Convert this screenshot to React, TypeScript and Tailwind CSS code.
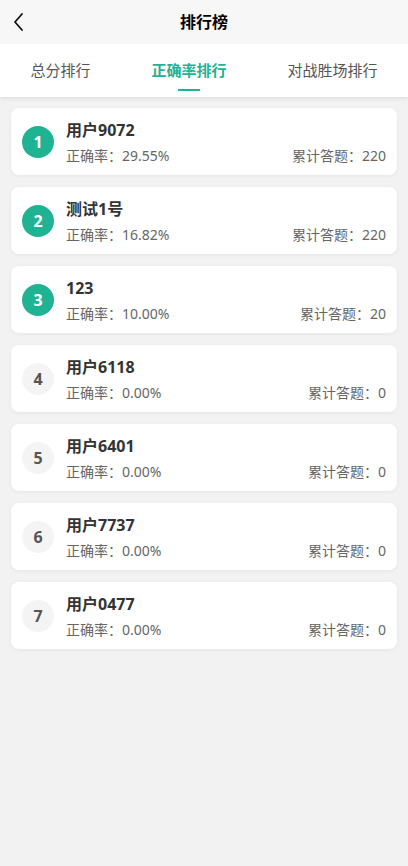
import React from "react";

const rows = [
  { name: "用户9072", rate: "29.55%", total: "220" },
  { name: "测试1号", rate: "16.82%", total: "220" },
  { name: "123", rate: "10.00%", total: "20" },
  { name: "用户6118", rate: "0.00%", total: "0" },
  { name: "用户6401", rate: "0.00%", total: "0" },
  { name: "用户7737", rate: "0.00%", total: "0" },
  { name: "用户0477", rate: "0.00%", total: "0" },
];

export default function App() {
  return (
    <div
      className="min-h-[866px] w-[408px] bg-[#f2f2f2]"
      style={{ fontFamily: '"Noto Sans", "Noto Sans CJK SC", sans-serif' }}
    >
      <div className="relative flex h-[44px] items-center justify-center bg-[#f7f7f7]">
        <svg className="absolute left-[12px] top-[12px]" width="14" height="20" viewBox="0 0 14 20" fill="none">
          <path d="M10 2 L3 10 L10 18" stroke="#111" strokeWidth="1.8" strokeLinecap="round" strokeLinejoin="round" />
        </svg>
        <span className="text-[16px] font-bold text-black">排行榜</span>
      </div>
      <div className="relative z-10 flex h-[53px] justify-around bg-white shadow-[0_2px_4px_rgba(0,0,0,0.08)]">
        <div className="flex items-center pb-[1px] text-[15px] text-[#555]">总分排行</div>
        <div className="relative flex items-center pb-[1px] text-[15px] font-bold text-[#1fb394]">
          正确率排行
          <div className="absolute bottom-[6px] left-1/2 h-[2px] w-[22px] -translate-x-1/2 bg-[#1fb394]" />
        </div>
        <div className="flex items-center pb-[1px] text-[15px] text-[#555]">对战胜场排行</div>
      </div>
      <div className="flex flex-col gap-[12px] px-[11px] pt-[11px]">
        {rows.map((r, i) => (
          <div
            key={i}
            className="flex h-[67px] items-center gap-[12px] rounded-[8px] bg-white px-[11px] shadow-[0_1px_4px_rgba(0,0,0,0.06)]"
          >
            <div
              className={
                i < 3
                  ? "flex h-[32px] w-[32px] shrink-0 items-center justify-center rounded-full bg-[#1fb394] text-[16px] font-bold text-white"
                  : "flex h-[32px] w-[32px] shrink-0 items-center justify-center rounded-full bg-[#f4f4f4] text-[16px] font-bold text-[#555]"
              }
            >
              {i + 1}
            </div>
            <div className="flex flex-1 flex-col pt-[2px]">
              <div className="text-[16px] font-bold leading-[20px] text-[#333]">{r.name}</div>
              <div className="mt-[6px] flex justify-between text-[14px] leading-[19px] text-[#666]">
                <span>正确率：{r.rate}</span>
                <span>累计答题：{r.total}</span>
              </div>
            </div>
          </div>
        ))}
      </div>
    </div>
  );
}
